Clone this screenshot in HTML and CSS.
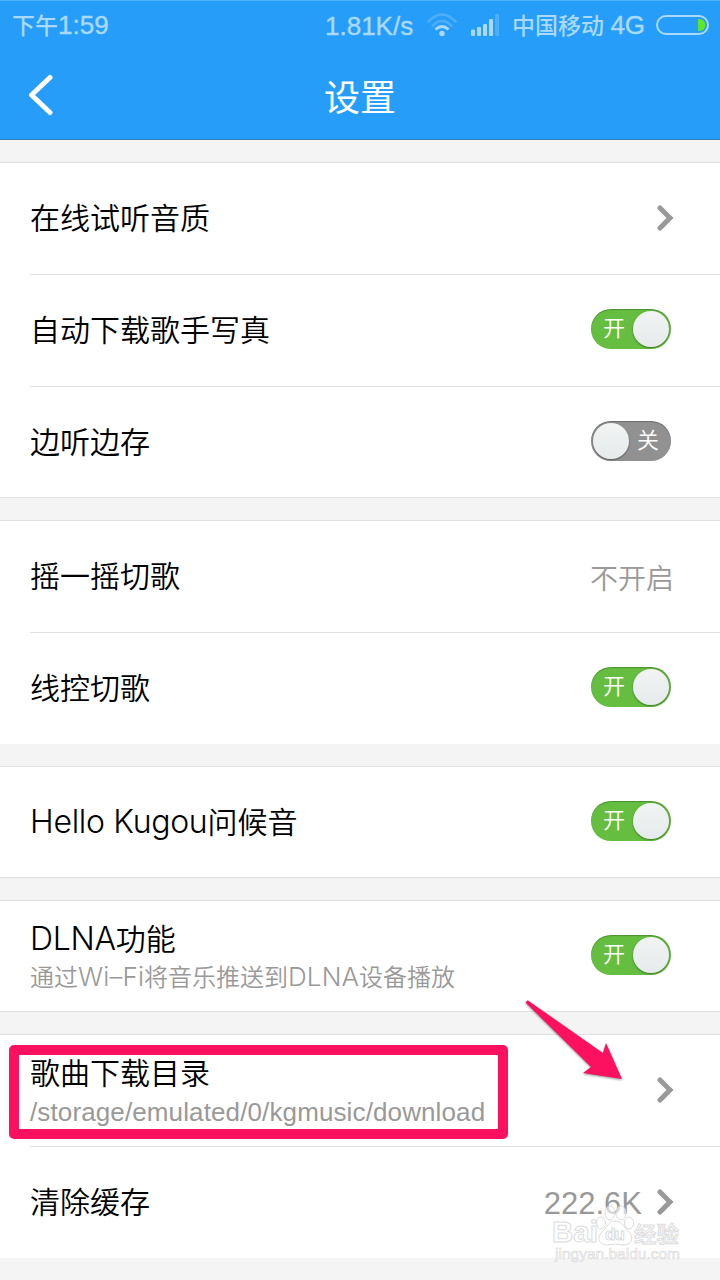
FILE: index.html
```html
<!DOCTYPE html>
<html lang="zh-CN">
<head>
  <meta charset="UTF-8">
  <title>设置</title>
  <link rel="stylesheet" href="styles.css">
</head>
<body>

<header class="header">
  <div class="status-bar">
    <span class="time">下午<b>1:59</b></span>
    <span class="speed">1.81K/s</span>
    <svg class="wifi" width="32" height="24" viewBox="0 0 32 24" fill="none" stroke="#a9d9fd">
      <path d="M1.500 9.500Q16 -6.500 30.500 9.500" stroke-width="2.600" opacity=".3"/>
      <path d="M6 13.500Q16 2.500 26 13.500" stroke-width="2.600" opacity=".3"/>
      <path d="M9.500 16.500Q16 10.500 22.500 16.500" stroke-width="3"/>
      <circle cx="16" cy="20.500" r="2.700" fill="#a9d9fd" stroke="none"/>
    </svg>
    <svg class="signal" width="29" height="23" viewBox="0 0 29 23" fill="#a9d9fd">
      <rect x="0" y="15.500" width="4" height="6.500" rx="1"/>
      <rect x="6" y="13" width="4" height="9" rx="1"/>
      <rect x="12" y="10" width="4" height="12" rx="1"/>
      <rect x="18" y="5" width="4" height="17" rx="1"/>
      <rect x="24" y="0" width="4" height="22" rx="1" opacity=".3"/>
    </svg>
    <span class="carrier">中国移动 <b>4G</b></span>
    <svg class="battery" width="53" height="20" viewBox="0 0 53 20">
      <path d="M42 4h1.500a6 6 0 0 1 0 12H42z" fill="#5ce62e"/>
      <rect x="1" y="1" width="51" height="18" rx="9" fill="none" stroke="#a9d9fd" stroke-width="2"/>
    </svg>
  </div>
  <div class="title-bar">
    <svg class="back" width="26" height="42" viewBox="0 0 26 42">
      <path d="M22 3.500L3.500 21L22 38.500" fill="none" stroke="#fff" stroke-width="5" stroke-linecap="round" stroke-linejoin="round"/>
    </svg>
    <h1>设置</h1>
  </div>
</header>

<main class="settings">
  <section class="group">
    <div class="row">
      <span class="name">在线试听音质</span>
      <svg class="arrow" width="18" height="26" viewBox="0 0 18 26"><path d="M3 3L13 13L3 23"/></svg>
    </div>
    <div class="row">
      <span class="name">自动下载歌手写真</span>
      <div class="switch on"><span>开</span><i></i></div>
    </div>
    <div class="row">
      <span class="name">边听边存</span>
      <div class="switch off"><i></i><span>关</span></div>
    </div>
  </section>

  <section class="group plain">
    <div class="row">
      <span class="name">摇一摇切歌</span>
      <span class="value">不开启</span>
    </div>
    <div class="row">
      <span class="name">线控切歌</span>
      <div class="switch on"><span>开</span><i></i></div>
    </div>
  </section>

  <section class="group">
    <div class="row">
      <span class="name"><span class="latin">Hello Kugou</span>问候音</span>
      <div class="switch on"><span>开</span><i></i></div>
    </div>
  </section>

  <section class="group">
    <div class="row">
      <div class="text">
        <span class="name"><span class="latin">DLNA</span>功能</span>
        <span class="desc">通过<span class="latin">Wi–Fi</span>将音乐推送到<span class="latin">DLNA</span>设备播放</span>
      </div>
      <div class="switch on"><span>开</span><i></i></div>
    </div>
  </section>

  <section class="group plain">
    <div class="row">
      <div class="text">
        <span class="name">歌曲下载目录</span>
        <span class="desc path">/storage/emulated/0/kgmusic/download</span>
      </div>
      <svg class="arrow" width="18" height="26" viewBox="0 0 18 26"><path d="M3 3L13 13L3 23"/></svg>
    </div>
    <div class="row">
      <span class="name">清除缓存</span>
      <span class="value size">222.6K</span>
      <svg class="arrow" width="18" height="26" viewBox="0 0 18 26"><path d="M3 3L13 13L3 23"/></svg>
    </div>
  </section>
</main>

<!-- Annotations -->
<div class="highlight"></div>
<svg class="pointer" width="104" height="90" viewBox="0 0 104 90">
  <path d="M3 0.500L78 53L81 43L97 79L58 73L66 67L1 3Q1 0 3 0.500Z" fill="#fb1160"/>
</svg>

<!-- Watermark -->
<svg class="watermark" width="140" height="66" viewBox="0 0 140 66">
  <g fill="#fff" fill-opacity=".6" stroke="#dcdcdc" stroke-width="1">
    <ellipse cx="59" cy="23" rx="4.500" ry="6"/>
    <ellipse cx="68" cy="13" rx="5" ry="7"/>
    <ellipse cx="79" cy="13" rx="5" ry="7"/>
    <ellipse cx="87" cy="23" rx="4.500" ry="6"/>
    <path d="M73 21C66 21 65 28 60 32C54 37 57 46 66 45Q73 43 80 45C90 46 92 37 87 32C82 28 81 21 73 21Z"/>
    <text class="wm-logo" x="10" y="42" textLength="46" lengthAdjust="spacingAndGlyphs">Bai</text>
    <text class="wm-du" x="63" y="40" textLength="20">du</text>
    <text class="wm-cn" x="92" y="42" textLength="45" lengthAdjust="spacingAndGlyphs">经验</text>
    <text class="wm-url" x="13" y="59" textLength="125" lengthAdjust="spacingAndGlyphs">jingyan.baidu.com</text>
  </g>
</svg>

</body>
</html>
```

FILE: styles.css
```css
* {
  box-sizing: border-box;
}

body {
  position: relative;
  width: 720px;
  height: 1280px;
  margin: 0;
  overflow: hidden;
  background: #f4f4f4;
  color: #000;
  font-family: "Liberation Sans", "Noto Sans CJK SC", sans-serif;
}

.header {
  height: 140px;
  background: #269df8;
  border-top: 1px solid #4db4fa;
  border-bottom: 1px solid #2f7fb8;
}

.status-bar {
  display: flex;
  align-items: center;
  height: 48px;
  padding: 0 11px 0 12px;
  color: #a9d9fd;
  font-size: 26px;
  white-space: nowrap;
}

.status-bar b {
  font-size: 26px;
  font-weight: 400;
  -webkit-text-stroke: 0.4px #a9d9fd;
}

.time {
  width: 313px;
  font-size: 23px;
  font-weight: 500;
  line-height: 30px;
}

.speed {
  width: 101px;
  margin-top: 2px;
  -webkit-text-stroke: 0.4px #a9d9fd;
}

.wifi {
  margin-right: 13px;
}

.signal {
  margin-right: 12px;
}

.carrier {
  width: 144px;
  font-size: 23px;
  font-weight: 500;
  line-height: 30px;
}

.title-bar {
  position: relative;
  display: flex;
  align-items: center;
  justify-content: center;
  height: 90px;
}

.title-bar h1 {
  margin: 9px 0 0;
  color: #fff;
  font-size: 36px;
  font-weight: 400;
  line-height: 50px;
}

.back {
  position: absolute;
  left: 28px;
  top: 25px;
}

.settings {
  display: flex;
  flex-direction: column;
  gap: 22px;
  padding-top: 22px;
}

.group {
  background: #fff;
  border-top: 1px solid #e0e0e0;
  box-shadow: inset 0 -1px #e0e0e0;
}

.group.plain {
  box-shadow: none;
}

.row {
  display: flex;
  align-items: center;
  height: 111px;
  margin-left: 30px;
  padding-right: 47px;
}

.row + .row {
  height: 112px;
  border-top: 1px solid #e0e0e0;
}

.name {
  margin-right: auto;
  font-size: 30px;
  font-weight: 350;
  line-height: 40px;
}

.name .latin {
  font-family: Inter, sans-serif;
  font-size: 32px;
  font-weight: 300;
  letter-spacing: -0.3px;
  line-height: 1;
}

.text {
  display: flex;
  flex-direction: column;
  margin-right: auto;
  padding-top: 3px;
}

.desc {
  color: #999;
  font-size: 24px;
  font-weight: 350;
  line-height: 36px;
  white-space: nowrap;
}

.desc .latin {
  font-family: Inter, sans-serif;
  font-weight: 300;
  font-size: 26px;
  letter-spacing: 0.1px;
  line-height: 1;
}

.path {
  font-size: 26px;
  letter-spacing: 0.12px;
}

.value {
  color: #999;
  font-size: 28px;
  font-weight: 350;
  margin-right: -1px;
}

.size {
  margin-right: 15px;
  padding-top: 2px;
  font-size: 31px;
}

.arrow path {
  fill: none;
  stroke: #999;
  stroke-width: 5;
  stroke-linecap: round;
}

.arrow {
  margin: 0 -2px 2px 0;
}

.switch {
  display: flex;
  align-items: center;
  justify-content: space-between;
  width: 80px;
  height: 40px;
  margin: 0 2px 3px 0;
  padding: 0 2px;
  border-radius: 20px;
  background: #65be40;
  box-shadow: inset 0 1px 1px rgba(0, 0, 0, 0.25);
  color: #fff;
  font-size: 22px;
  font-weight: 350;
  line-height: 38px;
}

.switch.on span {
  margin-left: 10px;
}

.switch.off {
  background: #919191;
}

.switch.off span {
  margin-right: 10px;
}

.switch i {
  width: 36px;
  height: 36px;
  border-radius: 50%;
  background: linear-gradient(#f2f4f4, #e6eaea);
  box-shadow: 0 1px 2px rgba(0, 0, 0, 0.4);
}

.highlight {
  position: absolute;
  left: 9px;
  top: 1045px;
  width: 499px;
  height: 94px;
  border: 10px solid #fb1160;
  border-radius: 5px;
}

.pointer {
  position: absolute;
  left: 525px;
  top: 1000px;
  filter: drop-shadow(0 1px 1px rgba(0, 0, 0, 0.45));
}

.watermark {
  position: absolute;
  left: 542px;
  top: 1200px;
}

.wm-logo {
  font: bold 29px "Liberation Sans", sans-serif;
}

.wm-du {
  font: bold 17px "Liberation Sans", sans-serif;
}

.wm-cn {
  font: 500 22px "Noto Sans CJK SC", sans-serif;
}

.wm-url {
  font: 15px "Liberation Sans", sans-serif;
  stroke-width: 0.7px;
}
```
